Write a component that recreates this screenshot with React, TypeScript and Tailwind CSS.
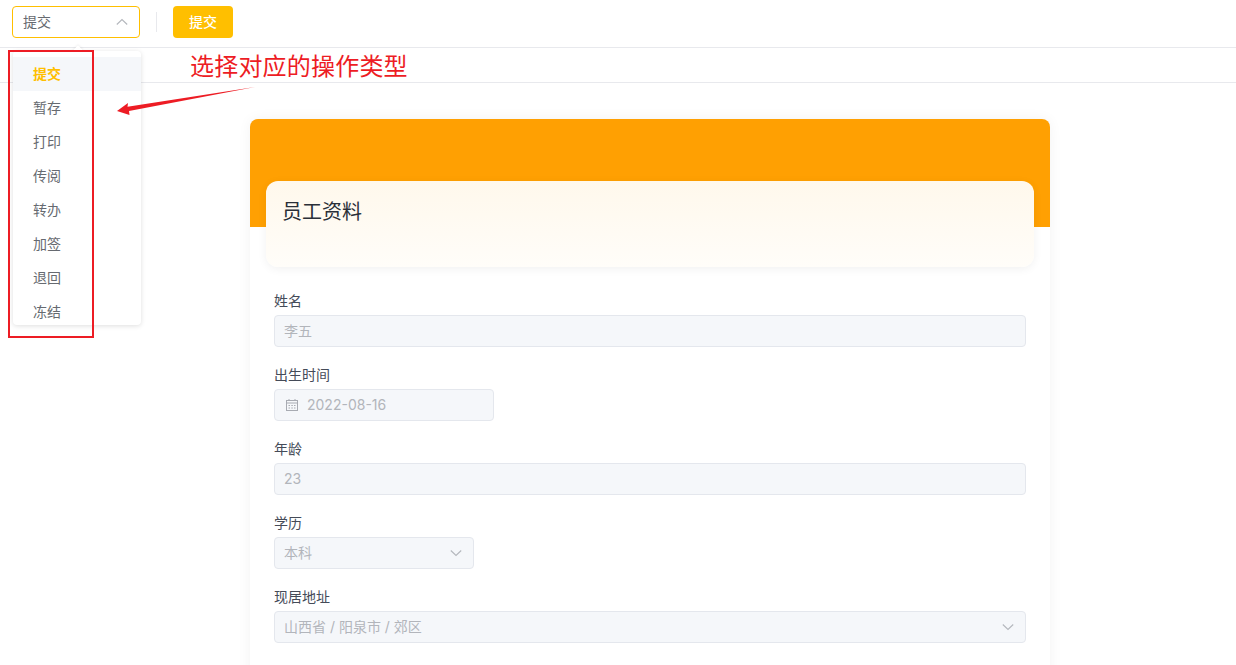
import React from "react";

const font = { fontFamily: 'Inter, "Noto Sans CJK SC", sans-serif' };

const inputBox =
  "h-8 rounded-[4px] border border-[#e4e7ed] bg-[#f5f7fa] text-sm text-[#b2b5bb] flex items-center";

function Chevron({ up = false, className = "" }: { up?: boolean; className?: string }) {
  return (
    <svg width="12" height="12" viewBox="0 0 12 12" fill="none" className={className}>
      <path
        d={up ? "M0.8 8.5 L6 3.5 L11.2 8.5" : "M0.8 3.5 L6 8.5 L11.2 3.5"}
        stroke="#b4b7bd"
        strokeWidth="1.1"
      />
    </svg>
  );
}

function Calendar() {
  return (
    <svg width="14" height="14" viewBox="0 0 14 14" fill="none" className="shrink-0">
      <rect x="1.5" y="2.5" width="11" height="10" stroke="#a8abb2" strokeWidth="1" />
      <path d="M1.5 5 H12.5" stroke="#a8abb2" strokeWidth="1" />
      <path d="M4 1 V3 M10 1 V3" stroke="#a8abb2" strokeWidth="1" />
      <path
        d="M3.5 7.5 H5 M6.3 7.5 H7.8 M9 7.5 H10.5 M3.5 10 H5 M6.3 10 H7.8 M9 10 H10.5"
        stroke="#a8abb2"
        strokeWidth="1"
      />
    </svg>
  );
}

function Field({ label, children }: { label: string; children: React.ReactNode }) {
  return (
    <div className="mb-3">
      <div className="h-[30px] flex items-center text-sm text-[#454b58] pt-[2px]">{label}</div>
      {children}
    </div>
  );
}

const items = ["提交", "暂存", "打印", "传阅", "转办", "加签", "退回", "冻结"];

export default function App() {
  return (
    <div style={font} className="relative h-[665px] w-[1236px] overflow-hidden bg-white">
      <div className="h-12 border-b border-[#e8e9ed] flex items-center pl-3 pb-[3px]">
        <div className="w-[128px] h-8 rounded-[4px] border border-[#ffbf00] flex items-center justify-between pl-[10px] pr-[11px] text-sm text-[#666a70]">
          <span>提交</span>
          <Chevron up />
        </div>
        <div className="w-px h-5 bg-[#e8e9ed] mx-4" />
        <div className="w-[60px] h-8 rounded-[4px] bg-[#ffbf00] text-white text-sm font-medium flex items-center justify-center">
          提交
        </div>
      </div>
      <div className="h-[35px] border-b border-[#e8e9ed]" />

      <div className="mt-9 ml-[250px] w-[800px] h-[700px] bg-white rounded-t-lg shadow-[0_0_14px_rgba(0,0,0,0.05)] relative">
        <div className="h-[108px] bg-[#ffa002] rounded-t-lg" />
        <div className="-mt-[46px] mx-4 h-[86px] relative rounded-xl bg-gradient-to-b from-[#fff8ec] to-[#fffdf9] shadow-[0_2px_10px_rgba(0,0,0,0.06)] px-4 pt-[17px] text-xl leading-7 text-[#2a2f38]">
          员工资料
        </div>
        <div className="px-6 mt-[18px]">
          <Field label="姓名">
            <div className={`${inputBox} px-[9px]`}>李五</div>
          </Field>
          <Field label="出生时间">
            <div className={`${inputBox} w-[220px] px-[10px] gap-2`}>
              <Calendar />
              <span>2022-08-16</span>
            </div>
          </Field>
          <Field label="年龄">
            <div className={`${inputBox} px-[9px]`}>23</div>
          </Field>
          <Field label="学历">
            <div className={`${inputBox} w-[200px] pl-[9px] pr-[11px] justify-between`}>
              <span>本科</span>
              <Chevron />
            </div>
          </Field>
          <Field label="现居地址">
            <div className={`${inputBox} pl-[9px] pr-[11px] justify-between`}>
              <span>山西省 / 阳泉市 / 郊区</span>
              <Chevron />
            </div>
          </Field>
        </div>
      </div>

      {/* dropdown menu */}
      <div className="absolute left-[13px] top-[51px] w-[128px] h-[274px] bg-white rounded-[4px] shadow-[0_1px_5px_rgba(0,0,0,0.13)] pt-[6px]">
        <div className="absolute left-[61px] -top-[4px] w-2 h-2 bg-white rotate-45 shadow-[-1px_-1px_2px_rgba(0,0,0,0.05)]" />
        {items.map((t, i) => (
          <div
            key={t}
            className={
              i === 0
                ? "relative h-[34px] flex items-center pl-5 text-sm font-bold text-[#ffbf00] bg-[#f5f7fa]"
                : "relative h-[34px] flex items-center pl-5 text-sm text-[#666a70]"
            }
          >
            {t}
          </div>
        ))}
      </div>

      {/* annotation */}
      <div className="absolute left-[8px] top-[50px] w-[86px] h-[288px] border-2 border-[#ed1c24]" />
      <div className="absolute left-[190px] top-[51px] text-2xl leading-8 text-[#ed1c24] whitespace-nowrap tracking-[0.2px]">
        选择对应的操作类型
      </div>
      <svg
        className="absolute left-[110px] top-[80px]"
        width="150"
        height="40"
        viewBox="0 0 150 40"
        fill="none"
      >
        <path d="M7 31 L18 23 L17.5 26.8 L145 7 L19 31 L19.5 35 Z" fill="#ed1c24" />
      </svg>
    </div>
  );
}
